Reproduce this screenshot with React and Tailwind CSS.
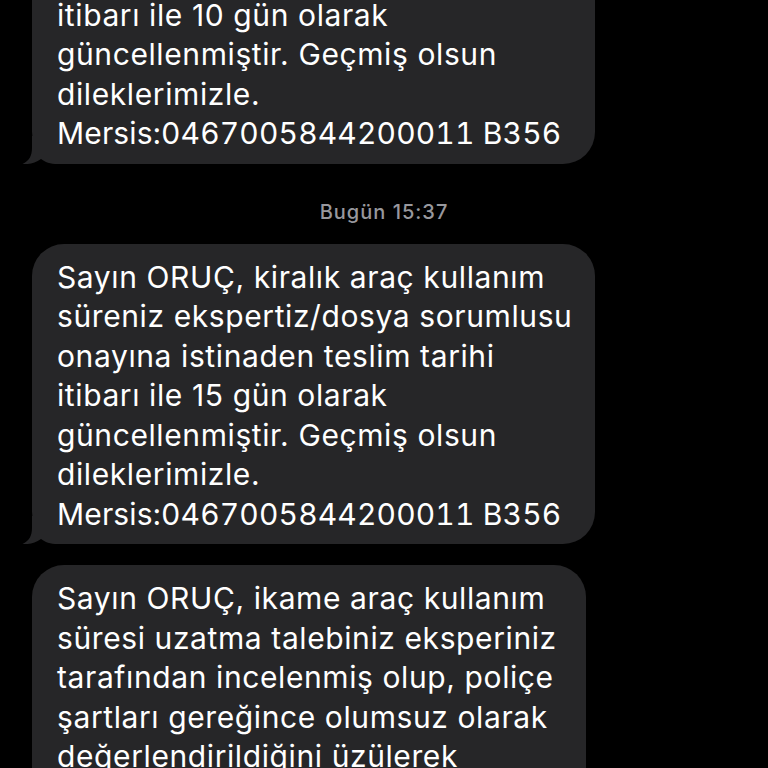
import React from "react";

const font = { fontFamily: "Inter, 'Noto Sans', sans-serif" };

function Tail() {
  return (
    <svg
      className="absolute left-[-10px] bottom-0"
      width="44"
      height="28"
      viewBox="0 0 44 28"
    >
      <path
        d="M10,0 L10,12 C10,20 7,25 0.5,28 C7,28.6 13,27 19,23 C23,26 28,28 36,28 L44,28 L44,0 Z"
        fill="#262628"
      />
    </svg>
  );
}

function Bubble({ lines, width, className = "", tail = true }) {
  return (
    <div
      className={`relative bg-[#262628] rounded-[32px] pl-[25px] pr-[20px] pt-[14px] pb-[10px] text-white text-[30px] leading-[39.5px] tracking-[0.6px] ${width} ${className}`}
    >
      {tail && <Tail />}
      <div className="relative">
        {lines.map((l, i) => (
          <div
            key={i}
            className={`whitespace-nowrap ${l.startsWith("Mersis") ? "tabular-nums tracking-[0.15px]" : ""}`}
          >
            {l}
          </div>
        ))}
      </div>
    </div>
  );
}

export default function App() {
  const msg = (n) => [
    "Sayın ORUÇ, kiralık araç kullanım",
    "süreniz ekspertiz/dosya sorumlusu",
    "onayına istinaden teslim tarihi",
    `itibarı ile ${n} gün olarak`,
    "güncellenmiştir. Geçmiş olsun",
    "dileklerimizle.",
    "Mersis:0467005844200011 B356",
  ];
  const third = [
    "Sayın ORUÇ, ikame araç kullanım",
    "süresi uzatma talebiniz eksperiniz",
    "tarafından incelenmiş olup, poliçe",
    "şartları gereğince olumsuz olarak",
    "değerlendirildiğini üzülerek",
    "bildiririz. Geçmiş olsun",
    "dileklerimizle.",
  ];
  return (
    <div
      className="w-[768px] h-[768px] bg-black overflow-hidden antialiased"
      style={font}
    >
      <div className="flex flex-col pl-[32px] -mt-[137px]">
        <Bubble lines={msg(10)} width="w-[563px]" />
        <div className="mt-[36px] mb-[20px] -ml-[32px] w-[768px] text-center text-[20px] leading-[24px] font-medium tracking-[1px] text-[#98989d]">
          Bugün 15:37
        </div>
        <Bubble lines={msg(15)} width="w-[563px]" />
        <Bubble lines={third} width="w-[554px]" className="mt-[21px]" />
      </div>
    </div>
  );
}
